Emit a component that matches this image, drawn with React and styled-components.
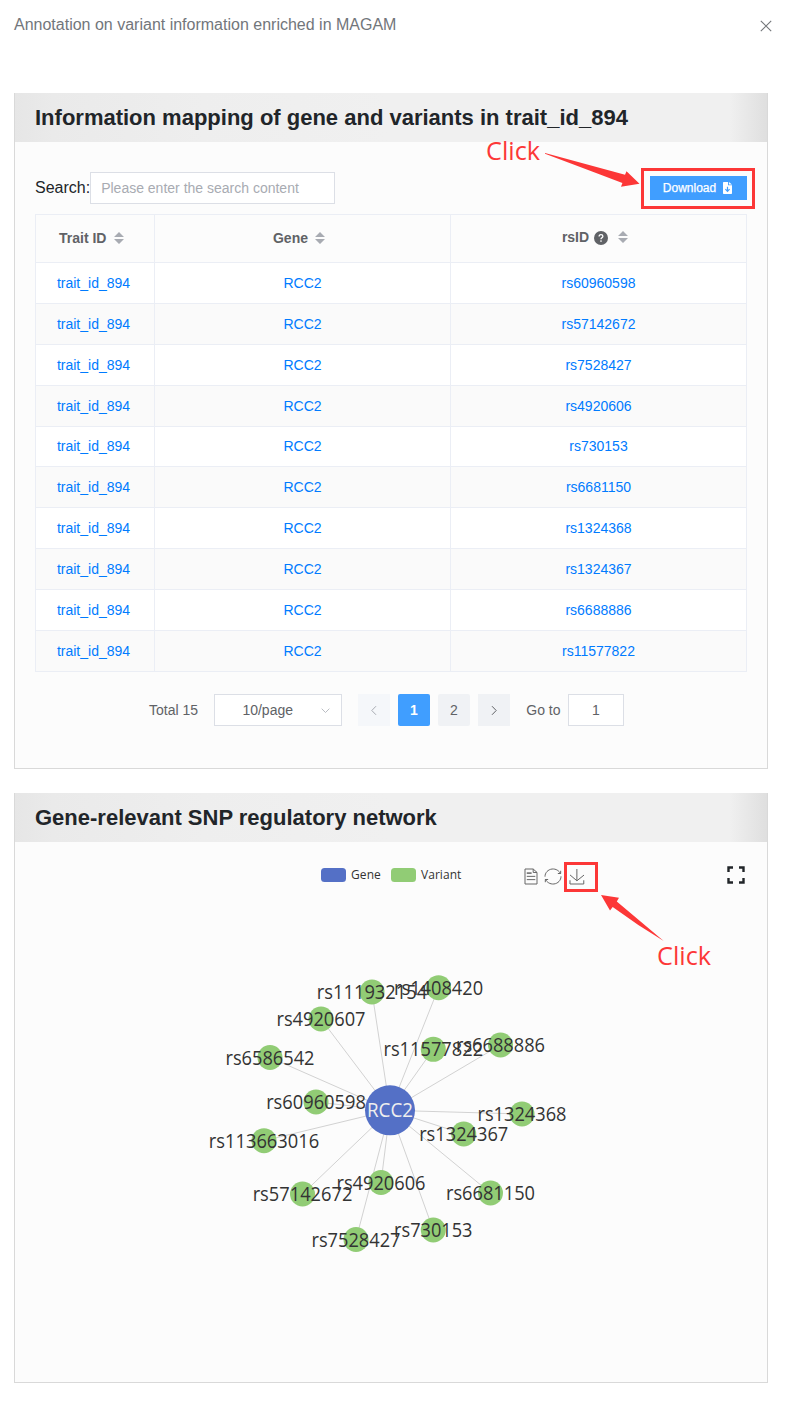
import React from "react";
import styled, { createGlobalStyle } from "styled-components";

const Global = createGlobalStyle`
  *, *::before, *::after { box-sizing: border-box; }
  body { margin: 0; background: #fff; font-family: "Liberation Sans", Arial, sans-serif; color: #212529; }
`;

const Page = styled.main`
  position: relative;
  width: 785px;
  height: 1403px;
  overflow: hidden;
  padding: 0 17px 0 14px;
`;
const DrawerHeader = styled.header`
  display: flex;
  justify-content: space-between;
  align-items: center;
  height: 93px;
  padding: 0 3px 43px 0;
  font-size: 16px;
  line-height: 20px;
  color: #72767b;
  svg { margin-right: -6.5px; margin-top: 2px; }
`;
const Panel = styled.section`
  display: flex;
  flex-direction: column;
  height: ${(p) => p.$height}px;
  margin-bottom: 24px;
  border: 1px solid #d9d9d9;
  border-top: 0;
  background: #fcfcfc;
`;
const PanelTitle = styled.h2`
  flex: none;
  margin: 0;
  height: 49px;
  padding-left: 20px;
  font-size: 22px;
  line-height: 49px;
  font-weight: 700;
  background: linear-gradient(90deg, #e6e6e6 0, #eaeaea 5%, #eeeeee 25%, #f0f0f0 50%, #f0f0f0 95%, #dfdfdf 100%);
`;
const Toolbar = styled.div`
  display: flex;
  align-items: center;
  height: 32px;
  margin: 30px 20px 10px;
  font-size: 16px;
`;
const SearchInput = styled.input`
  width: 245px;
  height: 32px;
  padding: 0 10px;
  border: 1px solid #dcdfe6;
  background: #fff;
  font: 14px "Liberation Sans", Arial, sans-serif;
  color: #606266;
  outline: none;
  &::placeholder { color: #a8abb2; opacity: 1; }
`;
const DownloadButton = styled.button`
  display: flex;
  align-items: center;
  justify-content: center;
  gap: 7px;
  width: 97px;
  height: 24px;
  margin-left: auto;
  padding: 0 2px 0 0;
  border: 0;
  background: #409eff;
  color: #fff;
  font: 12px "Liberation Sans", Arial, sans-serif;
  -webkit-text-stroke: 0.25px #fff;
`;
const Table = styled.div`
  width: 712px;
  margin-left: 20px;
  border: 1px solid #ebeef5;
  border-bottom: 0;
  font-size: 14px;
`;
const Row = styled.div`
  display: grid;
  grid-template-columns: 119px 296px 1fr;
  height: ${(p) => p.$height || 41}px;
  background: ${(p) => (p.$head ? "transparent" : p.$striped ? "#fafafa" : "#fff")};
`;
const Cell = styled.div`
  display: flex;
  align-items: center;
  justify-content: center;
  padding-bottom: ${(p) => p.$lift || 0}px;
  border-right: 1px solid #ebeef5;
  border-bottom: 1px solid #ebeef5;
  color: #007bff;
  &:first-child { padding-right: 3px; }
  &:last-child { border-right: 0; }
`;
const HeadCell = styled(Cell)`
  && { padding-right: ${(p) => p.$shift}px; }
  color: #606266;
  font-weight: 700;
  svg { flex: none; }
`;
const SortIcon = styled.svg`
  margin: 0 0 0 ${(p) => p.$gap || 8}px;
`;
const HelpIcon = styled.svg`
  margin: 1px 0 0 5px;
`;
const Pagination = styled.nav`
  display: flex;
  align-items: center;
  margin: 22px 0 0 134px;
  height: 32px;
  font-size: 14px;
  color: #606266;
`;
const PageLabel = styled.span`
  width: ${(p) => p.$width}px;
  padding-left: ${(p) => p.$indent || 0}px;
`;
const SizeSelect = styled.div`
  display: flex;
  align-items: center;
  justify-content: flex-end;
  gap: 27px;
  width: 128px;
  height: 32px;
  padding-right: 10px;
  margin-right: 16px;
  border: 1px solid #dcdfe6;
  background: #fff;
`;
const PageButton = styled.button`
  display: flex;
  align-items: center;
  justify-content: center;
  width: 32px;
  height: 32px;
  margin-right: 8px;
  padding: ${(p) => (p.$square ? "0 1px 0 0" : 0)};
  border: 0;
  border-radius: ${(p) => (p.$square ? 0 : 2)}px;
  background: ${(p) => (p.$active ? "#409eff" : p.$disabled ? "#f5f7fa" : "#f0f2f5")};
  color: ${(p) => (p.$active ? "#fff" : p.$disabled ? "#a8abb2" : "#606266")};
  font: ${(p) => (p.$active ? 700 : 400)} 14px "Liberation Sans", Arial, sans-serif;
`;
const GotoInput = styled.div`
  width: 56px;
  height: 32px;
  border: 1px solid #dcdfe6;
  background: #fff;
  text-align: center;
  line-height: 30px;
`;
const ChartBar = styled.div`
  display: flex;
  align-items: center;
  height: 66px;
  padding-right: 22.5px;
`;
const Legend = styled.div`
  display: flex;
  align-items: center;
  gap: 10px;
  margin-left: 306px;
  width: 203.5px;
`;
const LegendItem = styled.div`
  display: flex;
  align-items: center;
  gap: 5px;
  font: 12px "Open Sans", "Noto Sans", sans-serif;
  line-height: 16px;
  color: #333;
  letter-spacing: ${(p) => p.$spacing}px;
  &::before {
    content: "";
    width: 25px;
    height: 14px;
    border-radius: 3.5px;
    background: ${(p) => p.$color};
  }
`;
const ChartTools = styled.div`
  display: flex;
  align-items: center;
  gap: 8.5px;
  padding-top: 3px;
  svg { display: block; overflow: visible; }
`;
const FullscreenIcon = styled.svg`
  margin-left: auto;
`;
const NetworkText = styled.text`
  font-family: "Open Sans", "Noto Sans", sans-serif;
  font-size: 19.3px;
  text-anchor: middle;
  fill: ${(p) => p.$color || "#333"};
`;
const Highlight = styled.div`
  position: absolute;
  left: ${(p) => p.$x}px;
  top: ${(p) => p.$y}px;
  width: ${(p) => p.$w}px;
  height: ${(p) => p.$h}px;
  border: 3px solid #fc3737;
`;
const Callouts = styled.svg`
  position: absolute;
  left: 0;
  top: 0;
  pointer-events: none;
  text { font-family: "Open Sans", "Noto Sans", sans-serif; font-size: 25px; }
`;

const variants = ["rs60960598", "rs57142672", "rs7528427", "rs4920606", "rs730153", "rs6681150", "rs1324368", "rs1324367", "rs6688886", "rs11577822"];

const nodes = [
  ["rs60960598", 316, 1102], ["rs57142672", 302.5, 1194], ["rs7528427", 356, 1239.5],
  ["rs4920606", 381, 1182.5], ["rs730153", 433.3, 1230], ["rs6681150", 490.5, 1193],
  ["rs1324368", 522, 1114], ["rs1324367", 463.7, 1134], ["rs6688886", 500.5, 1045],
  ["rs11577822", 433.3, 1049.3], ["rs1408420", 438.6, 987.7], ["rs111932154", 372, 992],
  ["rs4920607", 321, 1019], ["rs6586542", 270, 1057.5], ["rs113663016", 264, 1140.7],
];
const center = { x: 390, y: 1110.3 };

const Sort = ({ gap }) => (
  <SortIcon $gap={gap} width="10" height="12" viewBox="0 0 10 12" fill="#a8abb2">
    <path d="M0 5 5 0l5 5zM0 7h10l-5 5z" />
  </SortIcon>
);

const Chevron = ({ d, color = "#606266", size = 12 }) => (
  <svg width={size} height={size} viewBox="0 0 12 12" fill="none" stroke={color}>
    <path d={d} />
  </svg>
);

const ToolIcon = ({ d, width, height, box }) => (
  <svg width={width} height={height} viewBox={box} fill="none" stroke="#666" preserveAspectRatio="none">
    <path d={d} vectorEffect="non-scaling-stroke" />
  </svg>
);

function Network() {
  return (
    <svg width="752" height="474" viewBox="15 908 752 474">
      <g stroke="#d2d2d2">
        {nodes.map(([id, x, y]) => (
          <line key={id} x1={center.x} y1={center.y} x2={x} y2={y} />
        ))}
      </g>
      <circle cx={center.x} cy={center.y} r="25" fill="#5470c6" />
      {nodes.map(([id, x, y]) => (
        <circle key={id} cx={x} cy={y} r="12.5" fill="#91cc75" />
      ))}
      <NetworkText x={center.x} y="1117" textLength="46" lengthAdjust="spacingAndGlyphs" $color="#eee">RCC2</NetworkText>
      {nodes.map(([id, x, y]) => (
        <NetworkText key={id} x={x} y={Math.round(y + 7)} textLength={14.5 + (id.length - 2) * 10.65} lengthAdjust="spacingAndGlyphs">
          {id}
        </NetworkText>
      ))}
    </svg>
  );
}

export default function App() {
  return (
    <Page>
      <Global />
      <DrawerHeader>
        <span>Annotation on variant information enriched in MAGAM</span>
        <svg width="12" height="12" viewBox="0 0 12 12" stroke="#73767a" strokeWidth="1.1">
          <path d="M.8.8l10.4 10.4M11.2.8.8 11.2" />
        </svg>
      </DrawerHeader>

      <Panel $height={676}>
        <PanelTitle>Information mapping of gene and variants in trait_id_894</PanelTitle>
        <Toolbar>
          <span>Search:</span>
          <SearchInput placeholder="Please enter the search content" />
          <DownloadButton>
            Download
            <svg width="9" height="12" viewBox="0 0 9 12">
              <path fill="#fff" d="M.7 0H5v3.3h4v8q0 .7-.7.7H.7Q0 12 0 11.3V.7Q0 0 .7 0zM5.9 0 9 2.5H5.9z" />
              <path d="M4.5 4.8v4.4M2.4 7.2l2.1 2.1 2.1-2.1" fill="none" stroke="#409eff" strokeWidth="1.2" />
            </svg>
          </DownloadButton>
        </Toolbar>
        <Table>
          <Row $head $height={48}>
            <HeadCell $lift={2} $shift={7}>Trait ID<Sort gap={7.5} /></HeadCell>
            <HeadCell $lift={2} $shift={7}>Gene<Sort gap={7} /></HeadCell>
            <HeadCell $lift={3} $shift={7}>
              rsID
              <HelpIcon width="14" height="14" viewBox="0 0 14 14">
                <circle cx="7" cy="7" r="7" fill="#606266" />
                <path d="M5.1 5.6q0-1.9 1.9-1.9t1.900 1.600Q8.900 6.300 7.800 6.850 7 7.250 7 8.200" fill="none" stroke="#fff" strokeWidth="1.3" />
                <circle cx="7" cy="10" r=".85" fill="#fff" />
              </HelpIcon>
              <Sort gap={10} />
            </HeadCell>
          </Row>
          {variants.map((id, i) => {
            const lift = i === 4 ? 1 : 0;
            return (
              <Row key={id} $striped={i % 2 === 1} $height={41 - lift}>
                <Cell $lift={lift}>trait_id_894</Cell>
                <Cell $lift={lift}>RCC2</Cell>
                <Cell $lift={lift}>{id}</Cell>
              </Row>
            );
          })}
        </Table>
        <Pagination>
          <PageLabel $width={65}>Total 15</PageLabel>
          <SizeSelect>
            10/page
            <Chevron d="M1.800 4 6 8.200 10.200 4" color="#b4b7bd" size={11} />
          </SizeSelect>
          <PageButton $disabled $square><Chevron d="M8 2.200 3.800 6.500 8 10.800" color="#a8abb2" /></PageButton>
          <PageButton $active>1</PageButton>
          <PageButton>2</PageButton>
          <PageButton $square><Chevron d="M4 2.200 8.200 6.500 4 10.800" /></PageButton>
          <PageLabel $width={50} $indent={8.3}>Go to</PageLabel>
          <GotoInput>1</GotoInput>
        </Pagination>
      </Panel>

      <Panel $height={590}>
        <PanelTitle>Gene-relevant SNP regulatory network</PanelTitle>
        <ChartBar>
          <Legend>
            <LegendItem $color="#5470c6" $spacing={0.1}>Gene</LegendItem>
            <LegendItem $color="#91cc75" $spacing={0.05}>Variant</LegendItem>
          </Legend>
          <ChartTools>
            <ToolIcon width={12} height={15} box="11.5 2 39.5 56" d="M17.5,17.3H33 M17.5,17.3H33 M45.4,29.5h-28 M11.5,2v56H51V14.8L38.4,2H11.5z M38.4,2.2v12.7H51 M45.4,41.7h-28" />
            <ToolIcon width={16} height={15} box="2 2 56 56" d="M47,18.9h9.8V8.7 M56.3,20.1 C52.1,9,40.5,0.6,26.8,2.1C12.6,3.7,1.6,16.2,2.1,30.6 M13,41.1H3.1v10.2 M3.7,39.9c4.2,11.1,15.8,19.5,29.5,18 c14.2-1.6,25.2-14.1,24.7-28.5" />
            <ToolIcon width={14} height={15} box="4.6 0 50 58" d="M4.7,22.9L29.3,45.5L54.7,23.4M4.6,43.6L4.6,58L53.8,58L53.8,43.6M29.2,45.1L29.2,0" />
          </ChartTools>
          <FullscreenIcon width="18" height="18" viewBox="0 0 18 18" fill="none" stroke="#212529" strokeWidth="2.4">
            <path d="M1.500 6V1.500H6M12 1.500H16.500V6M16.500 12V16.500H12M6 16.500H1.500V12" />
          </FullscreenIcon>
        </ChartBar>
        <Network />
      </Panel>

      <Highlight $x={641} $y={168} $w={114} $h={41} />
      <Highlight $x={564} $y={862} $w={34} $h={30} />
      <Callouts width="785" height="1000" fill="#fc3737">
        <path d="M545 153 L625 174.700 L626.500 171.300 L639.500 183.700 L621 186.800 L622.400 183 Q580 167 545 153.800z" />
        <path d="M601 895 L619 897.700 L616.800 901.400 L663.700 941 Q637 925 612.700 907 L610 910.500z" />
        <text x="486" y="160" textLength="54" lengthAdjust="spacingAndGlyphs">Click</text>
        <text x="657" y="965" textLength="54" lengthAdjust="spacingAndGlyphs">Click</text>
      </Callouts>
    </Page>
  );
}
